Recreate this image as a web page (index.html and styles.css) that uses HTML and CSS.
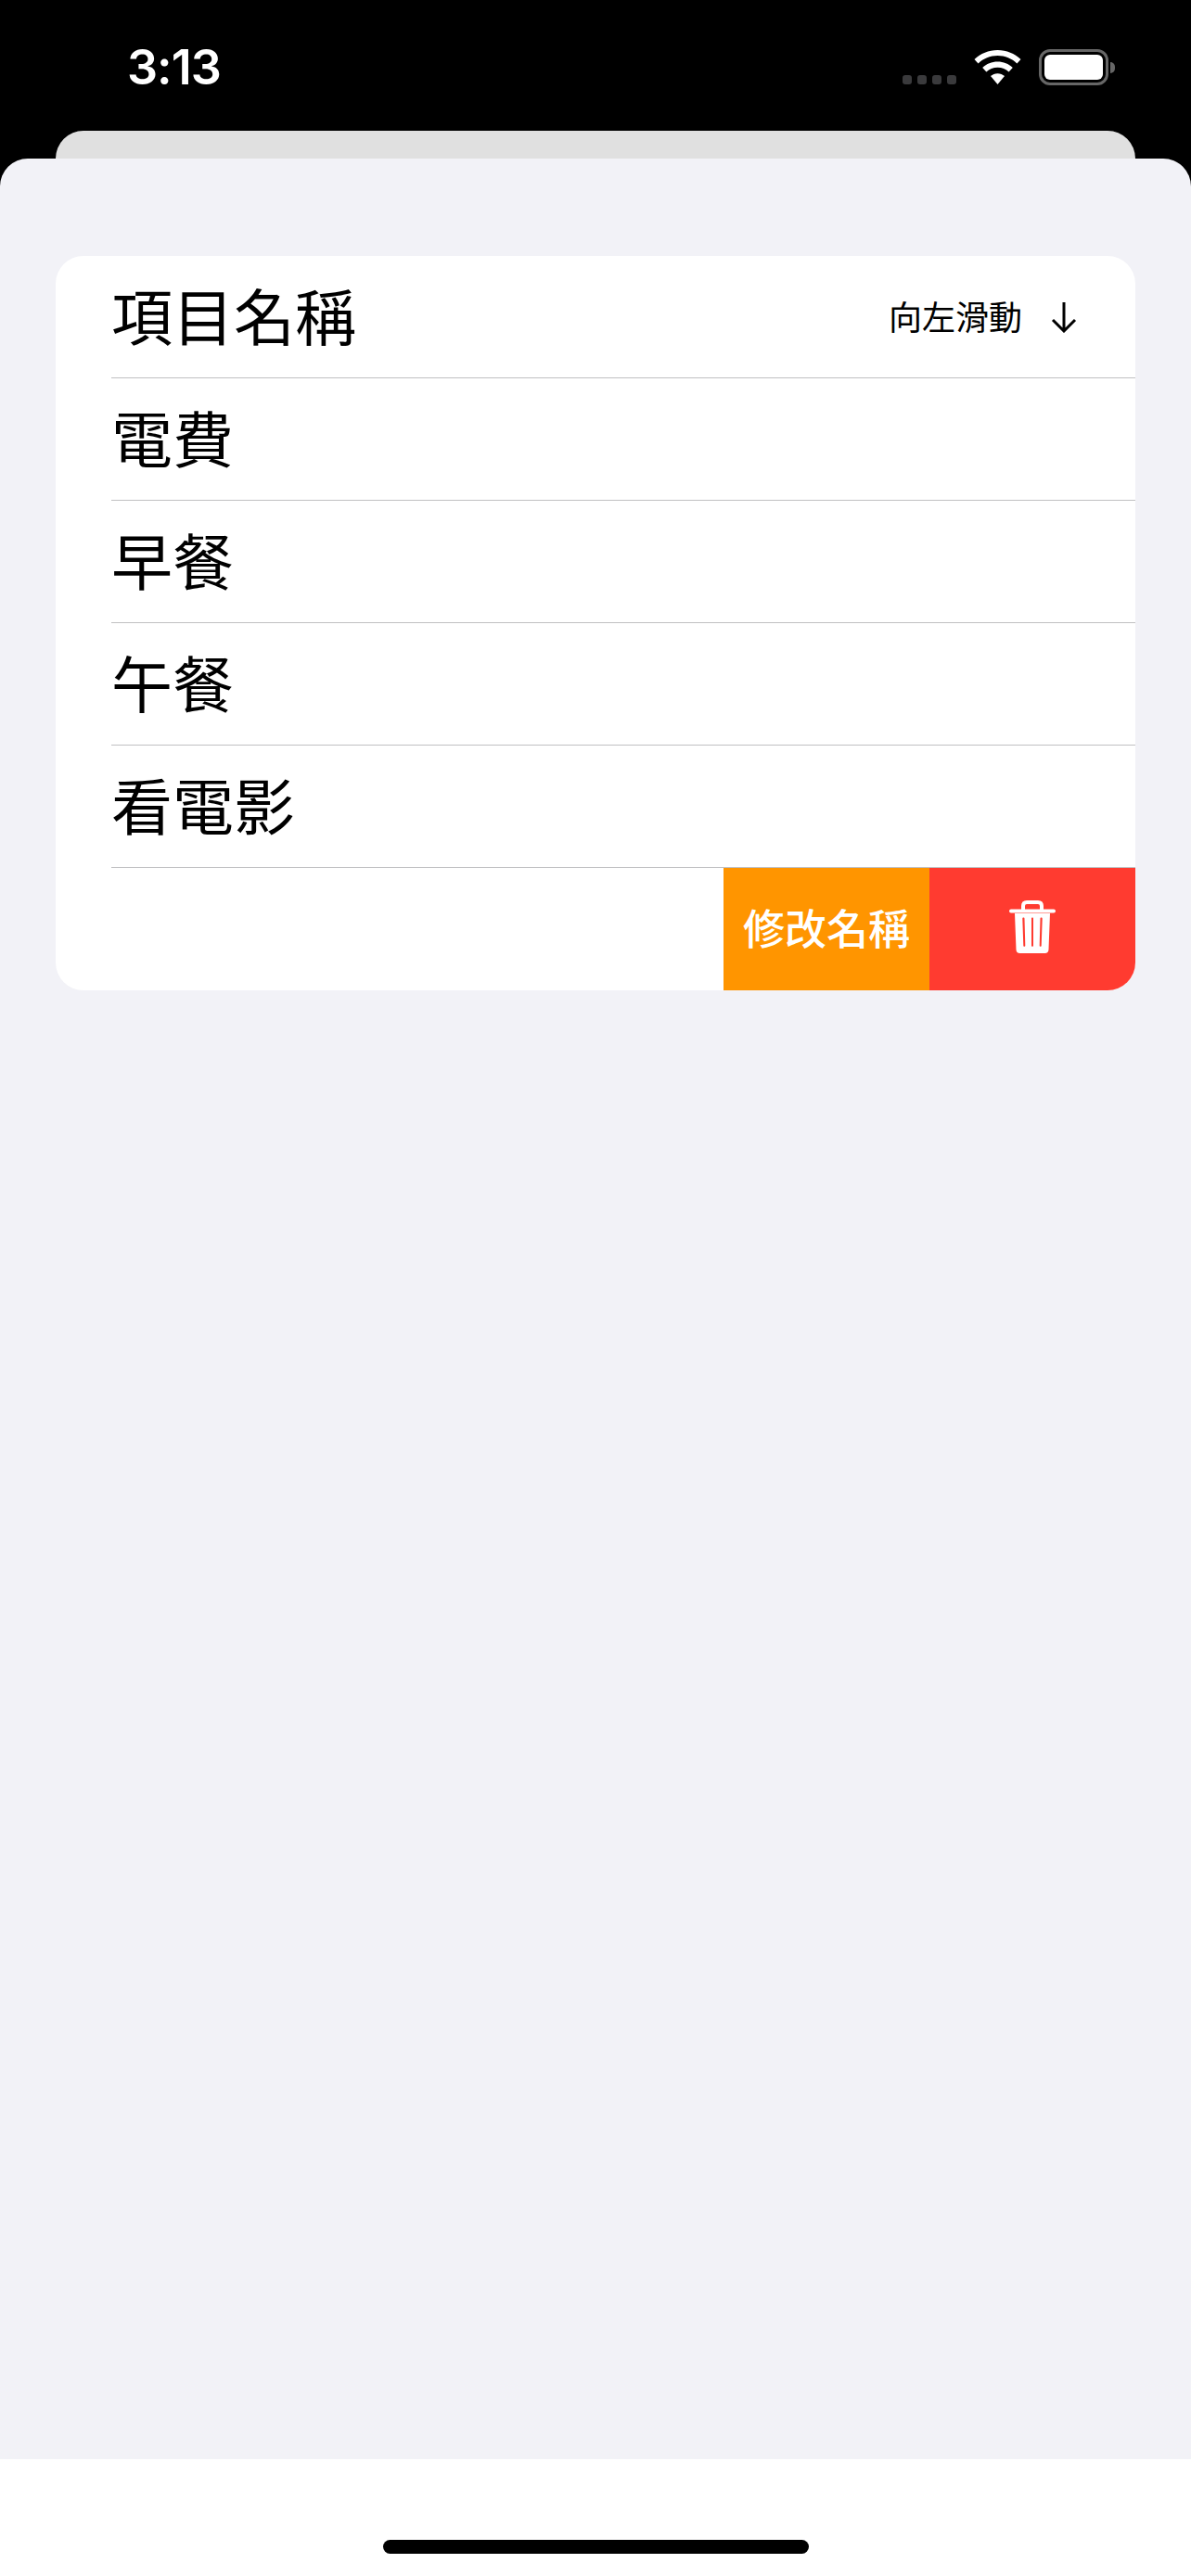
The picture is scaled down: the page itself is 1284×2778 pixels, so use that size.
FILE: index.html
```html
<!DOCTYPE html>
<html lang="zh-Hant">

<head>
    <meta charset="UTF-8">
    <meta name="viewport" content="width=device-width, initial-scale=1.0">
    <title>項目名稱</title>
    <link rel="stylesheet" href="styles.css">
</head>

<body>
    <div class="status-bar">
        <span class="time">3:13</span>
        <div class="status-icons">
            <div class="signal"><i></i><i></i><i></i><i></i></div>
            <svg class="wifi" width="51" height="37" viewBox="0 0 51 37">
                <path fill="#fff" d="M25.5 0C15.8 0 7.2 3.8 0.5 10L4.6 14.4C10.2 9.3 17.4 6.1 25.5 6.1C33.6 6.1 40.8 9.3 46.4 14.4L50.5 10C43.8 3.8 35.2 0 25.5 0Z" />
                <path fill="#fff" d="M25.5 12.6C19.2 12.6 13.6 15 9.2 19L13.4 23.6C16.6 20.6 20.8 18.8 25.5 18.8C30.2 18.8 34.4 20.6 37.6 23.6L41.8 19C37.4 15 31.8 12.6 25.5 12.6Z" />
                <path fill="#fff" d="M25.5 25.2C22.6 25.2 20 26.3 18 28.1L25.5 37L33 28.1C31 26.3 28.4 25.2 25.5 25.2Z" />
            </svg>
            <div class="battery">
                <div class="battery-body"><div class="battery-level"></div></div>
                <div class="battery-nub"></div>
            </div>
        </div>
    </div>

    <div class="back-sheet"></div>

    <div class="sheet">
        <div class="card">
            <div class="row">
                <div class="row-inner">
                    <span class="name">項目名稱</span>
                    <div class="hint">
                        <span class="hint-text">向左滑動</span>
                        <svg width="28" height="34" viewBox="0 0 28 34">
                            <path d="M14 1V32M2 20L14 32L26 20" fill="none" stroke="#000" stroke-width="3" />
                        </svg>
                    </div>
                </div>
            </div>
            <div class="row"><div class="row-inner"><span class="name">電費</span></div></div>
            <div class="row"><div class="row-inner"><span class="name">早餐</span></div></div>
            <div class="row"><div class="row-inner"><span class="name">午餐</span></div></div>
            <div class="row"><div class="row-inner"><span class="name">看電影</span></div></div>
            <div class="row swiped">
                <div class="action edit">修改名稱</div>
                <div class="action delete">
                    <svg width="50" height="57" viewBox="0 0 50 57">
                        <path fill="none" stroke="#fff" stroke-width="4" d="M15 11V6C15 3.500 16.500 2 19 2H31C33.500 2 35 3.500 35 6V11" />
                        <rect x="0" y="9.500" width="50" height="4" rx="2" fill="#fff" />
                        <path fill="#fff" fill-rule="evenodd" d="M6 14H44L42.500 53C42.400 55.500 41 57 38.500 57H11.500C9 57 7.600 55.500 7.500 53ZM15.500 18.500C14.700 18.500 14.300 19 14.300 19.800L15.300 48.800C15.300 50.200 17.300 50.200 17.300 48.800L16.500 19.800C16.500 19 16.200 18.500 15.500 18.500ZM25 18.500C24.300 18.500 24 19 24 19.800V48.800C24 50.200 26 50.200 26 48.800V19.800C26 19 25.700 18.500 25 18.500ZM34.500 18.500C33.800 18.500 33.500 19 33.500 19.800L32.700 48.800C32.700 50.200 34.700 50.200 34.700 48.800L35.700 19.800C35.700 19 35.300 18.500 34.500 18.500Z" />
                    </svg>
                </div>
            </div>
        </div>
    </div>

    <div class="footer">
        <div class="home-bar"></div>
    </div>
</body>

</html>
```

FILE: styles.css
```css
* {
    box-sizing: border-box;
}

body {
    margin: 0;
    height: 2778px;
    display: flex;
    flex-direction: column;
    background-color: #000;
    font-family: 'Noto Sans CJK TC', 'Noto Sans', sans-serif;
    color: #000;
    overflow: hidden;
}

.status-bar {
    height: 141px;
    flex-shrink: 0;
    display: flex;
    justify-content: space-between;
    align-items: flex-start;
    padding: 45px 82px 0 137px;
}

.time {
    margin-top: 1px;
    font-family: 'Inter', sans-serif;
    font-size: 52px;
    font-weight: 600;
    line-height: 54px;
    letter-spacing: -1px;
    color: #fff;
}

.status-icons {
    display: flex;
    align-items: flex-start;
    padding-top: 8px;
}

.signal {
    display: flex;
    gap: 6px;
    margin-top: 28px;
    margin-right: 19px;
}

.signal i {
    width: 10px;
    height: 10px;
    border-radius: 3px;
    background-color: #3a3a3c;
}

.wifi {
    margin-top: 1px;
    margin-right: 19px;
}

.battery {
    display: flex;
    align-items: center;
}

.battery-body {
    width: 75px;
    height: 39px;
    padding: 3px;
    border: 3px solid #666;
    border-radius: 12px;
}

.battery-level {
    height: 100%;
    background-color: #fff;
    border-radius: 6px;
}

.battery-nub {
    width: 5px;
    height: 12px;
    margin-left: 2px;
    background-color: #666;
    border-radius: 0 6px 6px 0;
}

.back-sheet {
    height: 30px;
    flex-shrink: 0;
    margin: 0 60px;
    background-color: #e0e0e0;
    border-radius: 30px 30px 0 0;
}

.sheet {
    height: 2481px;
    flex-shrink: 0;
    padding: 105px 60px 0;
    background-color: #f2f2f7;
    border-radius: 30px 30px 0 0;
}

.card {
    background-color: #fff;
    border-radius: 30px;
    overflow: hidden;
}

.row {
    height: 132px;
    padding-left: 60px;
}

.row-inner {
    height: 132px;
    display: flex;
    justify-content: space-between;
    align-items: center;
    border-bottom: 1px solid #c0c0c2;
}

.name {
    margin-bottom: 8px;
    font-size: 66px;
    line-height: 80px;
}

.hint {
    display: flex;
    align-items: center;
    gap: 31px;
    padding-right: 63px;
    font-size: 36px;
}

.hint-text {
    margin-bottom: 4px;
}

.swiped {
    display: flex;
    justify-content: flex-end;
}

.action {
    width: 222px;
    display: flex;
    justify-content: center;
    align-items: center;
    color: #fff;
}

.edit {
    padding-bottom: 6px;
    background-color: #ff9500;
    font-size: 45px;
    font-weight: 500;
}

.delete {
    padding-bottom: 5px;
    background-color: #ff3b30;
}

.footer {
    flex: 1;
    display: flex;
    justify-content: center;
    padding-top: 87px;
    background-color: #fff;
}

.home-bar {
    width: 459px;
    height: 15px;
    background-color: #000;
    border-radius: 8px;
}
```
